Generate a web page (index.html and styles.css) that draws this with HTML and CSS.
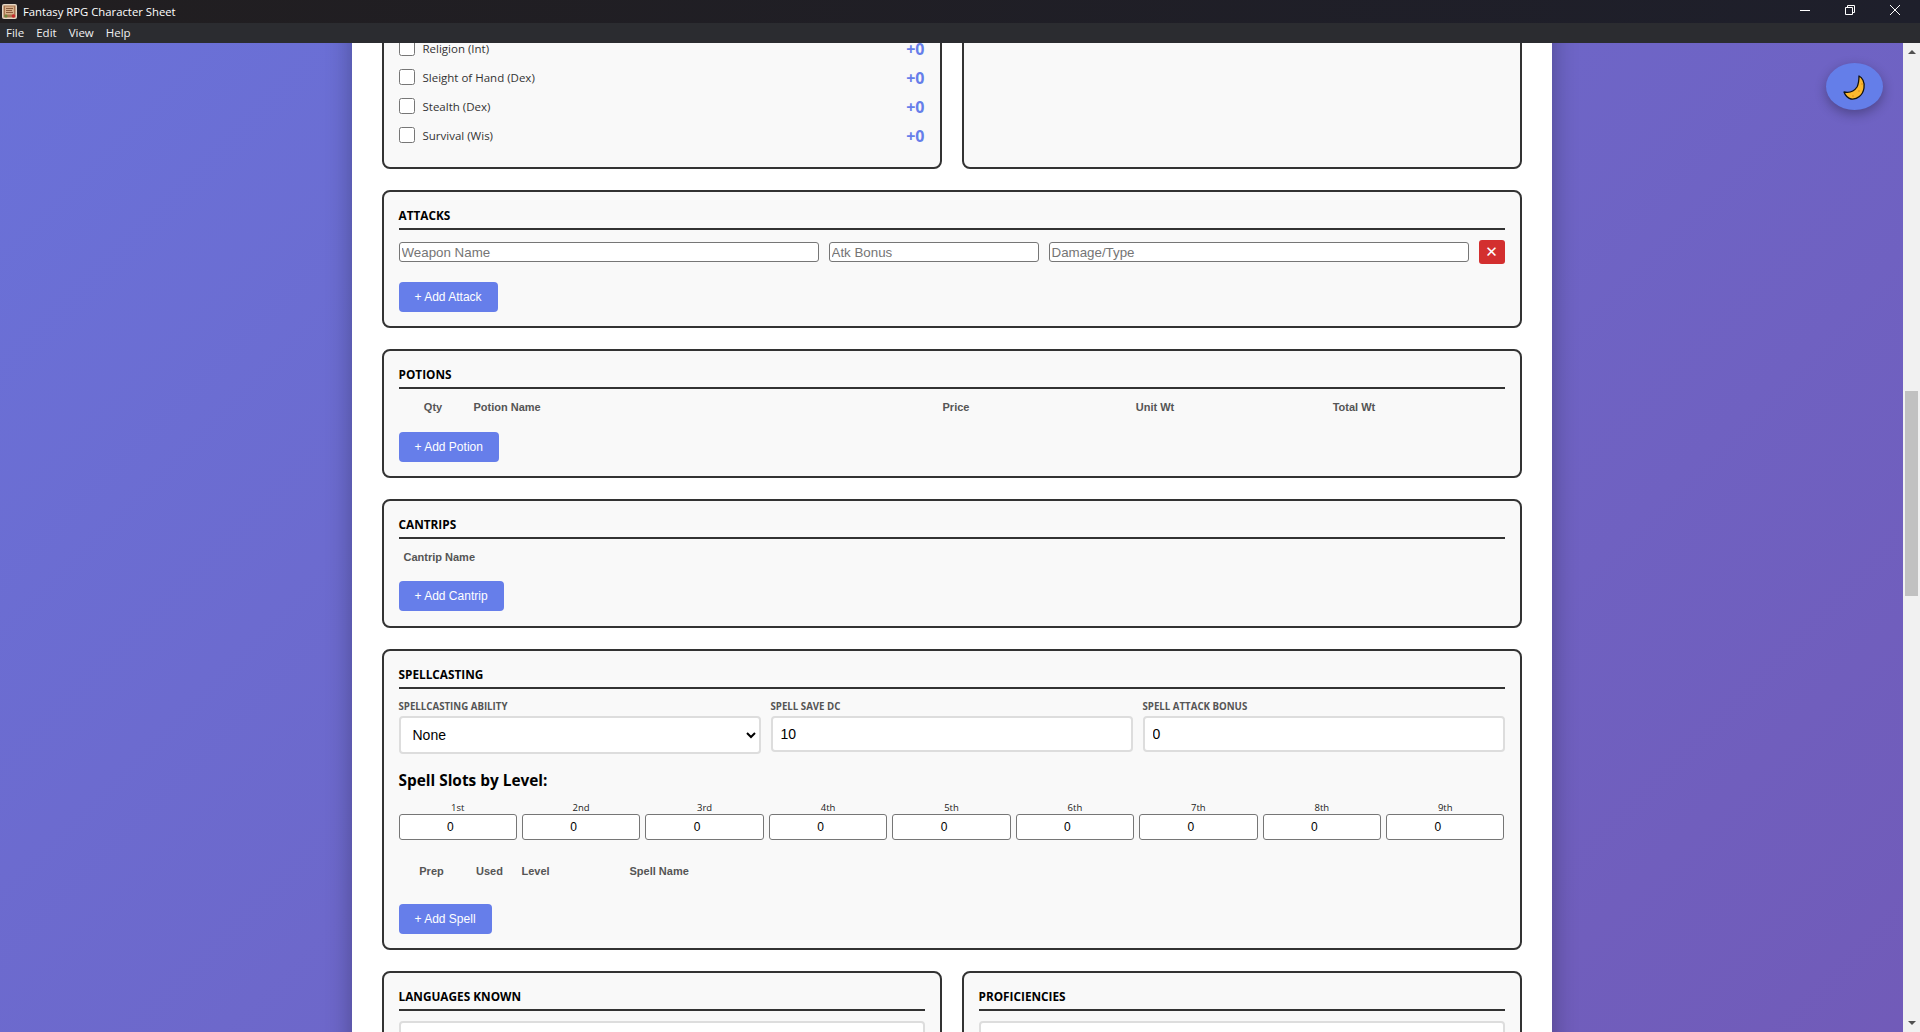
FILE: index.html
```html
<!DOCTYPE html>
<html>
    <head>
        <title>Fantasy RPG Character Sheet</title>
        <meta name="viewport" content="width=device-width, initial-scale=1">
        <link rel="stylesheet" href="styles.css">
    </head>
    <body>
        <!-- Window chrome -->
        <div class="titlebar">
            <div class="title">
                <svg class="appicon" width="15" height="15" viewBox="0 0 15 15">
                    <rect x="0" y="0" width="15" height="15" rx="2" fill="#e6d8c4"/>
                    <rect x="1.5" y="1.5" width="12" height="12" fill="#a9744e"/>
                    <rect x="3" y="2.5" width="9" height="8" fill="#d6b08a"/>
                    <path d="M4 4.5h7M4 6.5h6M4 8.5h7" stroke="#8a5a3c" stroke-width="1"/>
                    <circle cx="11.5" cy="12" r="1.8" fill="#c62d2d"/>
                    <circle cx="4" cy="12" r="1.5" fill="#6a8a3c"/>
                </svg>
                <span>Fantasy RPG Character Sheet</span>
            </div>
            <div class="wincontrols">
                <svg width="10" height="10" viewBox="0 0 10 10"><path d="M0 5.5h10" stroke="#fff"/></svg>
                <svg width="10" height="10" viewBox="0 0 10 10"><path d="M0.5 2.5h7v7h-7zM2.5 2.5v-2h7v7h-2" fill="none" stroke="#fff"/></svg>
                <svg width="10" height="10" viewBox="0 0 10 10"><path d="M0 0l10 10M10 0l-10 10" stroke="#fff"/></svg>
            </div>
        </div>
        <div class="menubar">
            <span>File</span>
            <span>Edit</span>
            <span>View</span>
            <span>Help</span>
        </div>

        <div class="window">
            <div class="viewport">
                <button class="theme-toggle">
                    <svg width="40" height="36" viewBox="0 0 40 36">
                        <path d="M24 9C27 10.5 30 15 29 21C28 28 22 33 16 32C13 31.5 10 28 9 25C14 26 19 24.5 22 20C24 16 24 12 24 9Z" fill="#fcb82e" stroke="#111" stroke-width="1.3" stroke-linejoin="round"/>
                        <circle cx="24" cy="24" r="0.8" fill="#e08a1c"/>
                        <circle cx="18" cy="29" r="0.8" fill="#e08a1c"/>
                        <circle cx="27" cy="17" r="0.8" fill="#e08a1c"/>
                    </svg>
                </button>

                <main class="sheet">
                    <div class="two-col skills-row">
                        <section class="card">
                            <div class="skill">
                                <input type="checkbox">
                                <label>Religion (Int)</label>
                                <span class="mod">+0</span>
                            </div>
                            <div class="skill">
                                <input type="checkbox">
                                <label>Sleight of Hand (Dex)</label>
                                <span class="mod">+0</span>
                            </div>
                            <div class="skill">
                                <input type="checkbox">
                                <label>Stealth (Dex)</label>
                                <span class="mod">+0</span>
                            </div>
                            <div class="skill">
                                <input type="checkbox">
                                <label>Survival (Wis)</label>
                                <span class="mod">+0</span>
                            </div>
                        </section>
                        <section class="card"></section>
                    </div>

                    <section class="card">
                        <h2>Attacks</h2>
                        <div class="attack-row">
                            <input type="text" class="wide" placeholder="Weapon Name">
                            <input type="text" class="narrow" placeholder="Atk Bonus">
                            <input type="text" class="wide" placeholder="Damage/Type">
                            <button class="remove">&#10005;</button>
                        </div>
                        <button class="add">+ Add Attack</button>
                    </section>

                    <section class="card">
                        <h2>Potions</h2>
                        <table class="list potions">
                            <tr>
                                <th class="col-qty">Qty</th>
                                <th class="col-name">Potion Name</th>
                                <th class="col-num">Price</th>
                                <th class="col-num">Unit Wt</th>
                                <th class="col-num">Total Wt</th>
                                <th></th>
                            </tr>
                        </table>
                        <button class="add">+ Add Potion</button>
                    </section>

                    <section class="card cantrip-card">
                        <h2>Cantrips</h2>
                        <table class="list cantrips">
                            <tr>
                                <th>Cantrip Name</th>
                            </tr>
                        </table>
                        <button class="add">+ Add Cantrip</button>
                    </section>

                    <section class="card">
                        <h2>Spellcasting</h2>
                        <div class="spell-stats">
                            <div class="field">
                                <label>Spellcasting Ability</label>
                                <select>
                                    <option>None</option>
                                </select>
                            </div>
                            <div class="field">
                                <label>Spell Save DC</label>
                                <input type="text" value="10">
                            </div>
                            <div class="field">
                                <label>Spell Attack Bonus</label>
                                <input type="text" value="0">
                            </div>
                        </div>

                        <h4>Spell Slots by Level:</h4>
                        <div class="slots">
                            <div class="slot"><label>1st</label><input type="number" value="0"></div>
                            <div class="slot"><label>2nd</label><input type="number" value="0"></div>
                            <div class="slot"><label>3rd</label><input type="number" value="0"></div>
                            <div class="slot"><label>4th</label><input type="number" value="0"></div>
                            <div class="slot"><label>5th</label><input type="number" value="0"></div>
                            <div class="slot"><label>6th</label><input type="number" value="0"></div>
                            <div class="slot"><label>7th</label><input type="number" value="0"></div>
                            <div class="slot"><label>8th</label><input type="number" value="0"></div>
                            <div class="slot"><label>9th</label><input type="number" value="0"></div>
                        </div>

                        <table class="list spells">
                            <tr>
                                <th class="col-prep">Prep</th>
                                <th class="col-used">Used</th>
                                <th class="col-level">Level</th>
                                <th class="col-spell">Spell Name</th>
                            </tr>
                        </table>
                        <button class="add">+ Add Spell</button>
                    </section>

                    <div class="two-col">
                        <section class="card">
                            <h2>Languages Known</h2>
                            <textarea></textarea>
                        </section>
                        <section class="card">
                            <h2>Proficiencies</h2>
                            <textarea></textarea>
                        </section>
                    </div>
                </main>
            </div>

            <div class="scrollbar">
                <div class="arrow-up"></div>
                <div class="track"><div class="thumb"></div></div>
                <div class="arrow-down"></div>
            </div>
        </div>
    </body>
</html>
```

FILE: styles.css
```css
* {
    box-sizing: border-box;
}
html, body {
    height: 100%;
}
body {
    margin: 0;
    overflow: hidden;
    display: flex;
    flex-direction: column;
    font-family: "Open Sans", "Liberation Sans", sans-serif;
    color: #333;
}

/* window chrome */
.titlebar {
    height: 23px;
    display: flex;
    justify-content: space-between;
    align-items: center;
    background: linear-gradient(90deg, #211e20, #1e1f2b);
    color: #fff;
    font-size: 11.3px;
}
.title {
    display: flex;
    align-items: center;
    gap: 6px;
    padding-left: 2px;
}
.wincontrols {
    display: flex;
    gap: 35px;
    padding-right: 20px;
    margin-top: -3px;
}
.wincontrols svg {
    display: block;
}
.menubar {
    height: 20px;
    display: flex;
    align-items: center;
    gap: 12px;
    padding: 0 0 2px 6px;
    background: #2b2c30;
    color: #f0f0f0;
    font-size: 11.5px;
}
.window {
    flex: 1;
    display: flex;
    min-height: 0;
}

/* page area, gradient spans the whole scrolled page */
.viewport {
    position: relative;
    flex: 1;
    overflow: hidden;
    display: flex;
    flex-direction: column;
    align-items: center;
    background-image: linear-gradient(135deg, #667eea 0%, #764ba2 100%);
    background-size: 1903px 4630px;
    background-position: 0 -1610px;
}
.theme-toggle {
    position: absolute;
    top: 20px;
    right: 20px;
    width: 57px;
    height: 47px;
    padding: 0 0 4px;
    border: none;
    border-radius: 50%;
    background: #647ee9;
    box-shadow: 0 4px 12px rgba(0, 0, 0, 0.3);
    display: flex;
    align-items: center;
    justify-content: center;
}
.sheet {
    width: 1200px;
    flex-shrink: 0;
    margin-top: -28px;
    padding: 0 30px 40px;
    background: #fff;
    box-shadow: 0 0 24px rgba(0, 0, 0, 0.3);
    display: flex;
    flex-direction: column;
    gap: 21px;
}

/* cards */
.two-col {
    display: grid;
    grid-template-columns: 1fr 1fr;
    gap: 20px;
}
.card {
    padding: 16px 15px 14px;
    background: #f9f9f9;
    border: 2px solid #333;
    border-radius: 8px;
}
.cantrip-card {
    padding-bottom: 15px;
}
h2 {
    margin: 0 0 10px;
    height: 22px;
    border-bottom: 2px solid #333;
    font-size: 11.8px;
    line-height: 14px;
    font-weight: 700;
    text-transform: uppercase;
    color: #000;
}
h4 {
    margin: 16px 0 0;
    font-size: 15.4px;
    line-height: 22px;
    font-weight: 700;
    color: #000;
}

/* skills */
.skills-row .card {
    padding-bottom: 18px;
}
.skill {
    height: 29px;
    display: flex;
    align-items: center;
    gap: 8px;
}
.skill input {
    width: 16px;
    height: 16px;
    margin: 0;
}
.skill label {
    flex: 1;
    margin-top: 2px;
    font-size: 11.5px;
}
.mod {
    margin-top: 2px;
    font-size: 16px;
    font-weight: 700;
    color: #667eea;
}

/* attacks */
.attack-row {
    display: flex;
    align-items: center;
    gap: 10px;
    margin-bottom: 18px;
}
.attack-row input {
    min-width: 0;
    height: 20px;
    padding: 1px 2px;
    border: 1px solid #767676;
    border-radius: 3px;
    background: #fff;
    font-family: "Liberation Sans", sans-serif;
    font-size: 13.33px;
}
.wide {
    flex: 2 1 420px;
}
.narrow {
    flex: 1 1 210px;
}
.remove {
    flex-shrink: 0;
    width: 26px;
    height: 24px;
    padding: 0;
    border: none;
    border-radius: 3px;
    background: #d32f2f;
    color: #fff;
    font-size: 15px;
    font-weight: 700;
    font-family: "DejaVu Sans", sans-serif;
}
.add {
    display: block;
    height: 30px;
    padding: 0 16px;
    border: none;
    border-radius: 4px;
    background: #667eea;
    color: #fff;
    font-family: "Liberation Sans", sans-serif;
    font-size: 12px;
}

/* table headers */
.list {
    width: 100%;
    table-layout: fixed;
    border-collapse: collapse;
    margin-bottom: 17px;
}
.list th {
    height: 16px;
    padding: 0;
    font-family: "Liberation Sans", sans-serif;
    font-size: 11px;
    font-weight: 700;
    color: #555;
}
.col-qty {
    width: 69px;
}
.potions .col-name {
    width: 389px;
    padding-left: 6px;
    text-align: left;
}
.col-num {
    width: 199px;
}
.cantrips {
    margin-bottom: 16px;
}
.cantrips th {
    padding-left: 5px;
    text-align: left;
}
.spells {
    margin-top: 23px;
    margin-bottom: 25px;
}
.col-prep {
    width: 66px;
}
.col-used {
    width: 50px;
}
.col-level {
    width: 42px;
}
.spells th:last-child {
    text-align: left;
    padding-left: 73px;
}

/* spellcasting */
.spell-stats {
    display: grid;
    grid-template-columns: repeat(3, 1fr);
    gap: 10px;
    align-items: start;
    margin-top: 12px;
}
.field label {
    display: block;
    margin-bottom: 3px;
    font-size: 9.7px;
    line-height: 12px;
    font-weight: 700;
    text-transform: uppercase;
    color: #555;
}
.field select,
.field input {
    display: block;
    width: 100%;
    border: 2px solid #ddd;
    border-radius: 4px;
    background: #fff;
    font-family: "Liberation Sans", sans-serif;
    font-size: 14px;
    color: #000;
}
.field select {
    height: 38px;
    padding: 0 8px;
}
.field input {
    height: 36px;
    padding: 0 8px;
}
.slots {
    display: grid;
    grid-template-columns: repeat(9, 1fr);
    gap: 5px;
    margin-top: 10px;
}
.slot label {
    display: block;
    font-size: 9.5px;
    line-height: 12px;
    text-align: center;
    color: #222;
}
.slot input {
    display: block;
    width: 100%;
    height: 26px;
    padding: 1px 2px;
    border: 1px solid #767676;
    border-radius: 3px;
    background: #fff;
    font-family: "Liberation Sans", sans-serif;
    font-size: 12px;
    text-align: center;
}

textarea {
    display: block;
    width: 100%;
    height: 80px;
    border: 2px solid #ddd;
    border-radius: 4px;
    background: #fff;
}

/* scrollbar */
.scrollbar {
    width: 17px;
    display: flex;
    flex-direction: column;
    align-items: center;
    background: #f1f1f1;
}
.arrow-up,
.arrow-down {
    width: 0;
    height: 0;
    border-left: 4px solid transparent;
    border-right: 4px solid transparent;
}
.arrow-up {
    margin: 7px 0 6px;
    border-bottom: 4px solid #505050;
}
.arrow-down {
    margin: 6px 0 7px;
    border-top: 4px solid #505050;
}
.track {
    flex: 1;
    width: 13px;
}
.thumb {
    height: 205px;
    margin-top: 331px;
    background: #c1c1c1;
}
```
